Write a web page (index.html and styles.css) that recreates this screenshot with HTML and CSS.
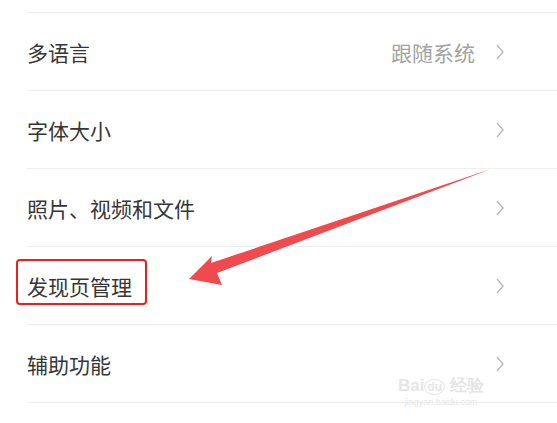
FILE: index.html
```html
<!DOCTYPE html>
<html lang="zh">
<head>
<meta charset="utf-8">
<link rel="stylesheet" href="styles.css">
</head>
<body>
<div class="page">
  <div class="top"></div>
  <ul class="list">
    <li class="row"><span class="label">多语言</span><span class="right"><span class="value">跟随系统</span><svg class="chev" viewBox="0 0 8 16" width="8" height="16"><polyline points="1,1 7,8 1,15"/></svg></span></li>
    <li class="row"><span class="label">字体大小</span><span class="right"><svg class="chev" viewBox="0 0 8 16" width="8" height="16"><polyline points="1,1 7,8 1,15"/></svg></span></li>
    <li class="row"><span class="label">照片、视频和文件</span><span class="right"><svg class="chev" viewBox="0 0 8 16" width="8" height="16"><polyline points="1,1 7,8 1,15"/></svg></span></li>
    <li class="row"><span class="label highlight">发现页管理</span><span class="right"><svg class="chev" viewBox="0 0 8 16" width="8" height="16"><polyline points="1,1 7,8 1,15"/></svg></span></li>
    <li class="row"><span class="label">辅助功能</span><span class="right"><svg class="chev" viewBox="0 0 8 16" width="8" height="16"><polyline points="1,1 7,8 1,15"/></svg></span></li>
  </ul>
  <svg class="arrow" viewBox="0 0 557 423" width="557" height="423"><polygon points="491,169 211,263 212,256 189,279 222,285 217,273"/></svg>
  <div class="watermark"><div class="wm1">Bai<span class="paw">du</span> 经验</div><div class="wm2">jingyan.baidu.com</div></div>
</div>
</body>
</html>
```
FILE: styles.css
```css
html, body { margin: 0; padding: 0; background: #fff; }
.page {
  position: relative;
  width: 557px;
  height: 423px;
  overflow: hidden;
  font-family: "Noto Sans CJK SC", "Noto Sans", sans-serif;
}
.top { height: 12px; margin-left: 27px; border-bottom: 1px solid #f0f0f0; }
.list { list-style: none; margin: 0 0 0 27px; padding: 0; }
.row {
  height: 77px;
  border-bottom: 1px solid #f0f0f0;
  display: flex;
  align-items: center;
  justify-content: space-between;
  padding-right: 53px;
}
.label { position: relative; font-size: 21px; color: #363636; }
.highlight::after {
  content: "";
  position: absolute;
  left: -11px;
  top: -12px;
  width: 127px;
  height: 42px;
  border: 2.5px solid #ec1f1c;
  border-radius: 4px;
}
.right { display: flex; align-items: center; gap: 21px; }
.value { font-size: 21px; color: #a3a3a3; }
.chev { fill: none; stroke: #b8b8b8; stroke-width: 1.4; }
.arrow { position: absolute; left: 0; top: 0; }
.arrow polygon { fill: #f04a4e; }
.watermark {
  position: absolute;
  left: 398px;
  top: 377px;
  color: #e6e6e6;
  font-family: "Liberation Sans", sans-serif;
  text-align: center;
}
.wm1 { font-size: 17px; line-height: 18px; font-weight: bold; }
.paw { border: 1px solid #e6e6e6; border-radius: 50%; padding: 0 2px; font-size: 12px; }
.wm2 { font-size: 9px; line-height: 12px; }
```
